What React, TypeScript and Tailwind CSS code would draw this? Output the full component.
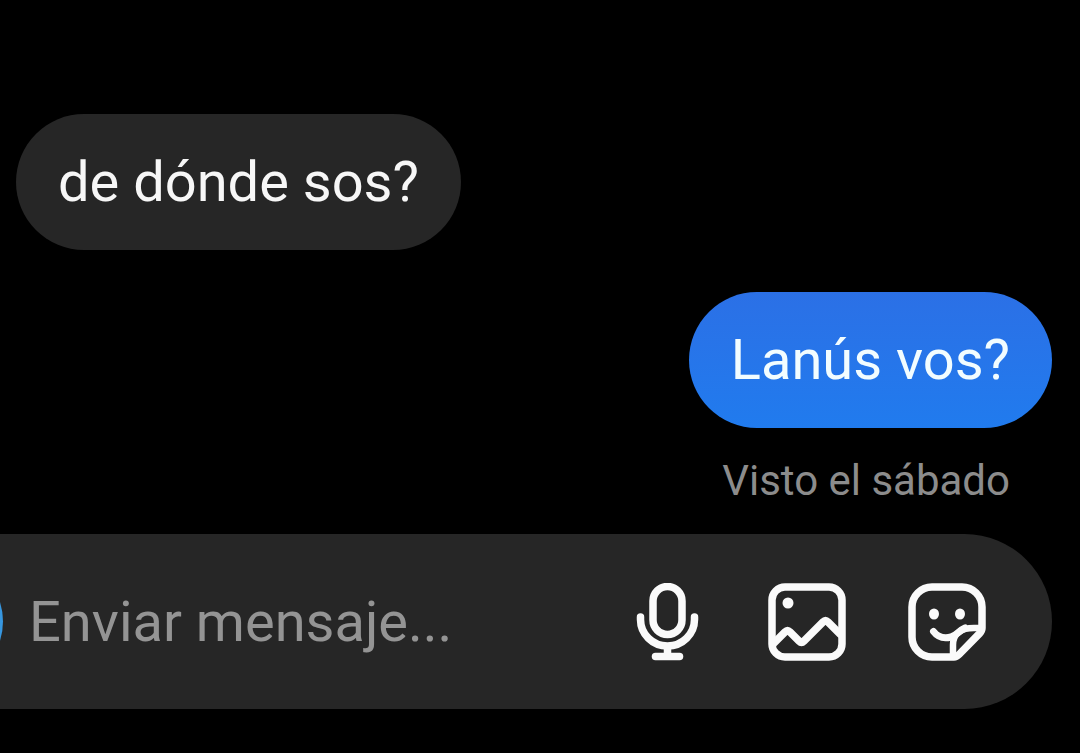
import type { ReactNode } from 'react';

function Bubble({ own = false, children }: { own?: boolean; children: ReactNode }) {
  return (
    <p
      className={
        own
          ? 'max-w-4/5 self-end rounded-[68px] bg-linear-to-b from-[#2b70e6] to-[#207bee] px-[42px] py-9 text-[56px] leading-[64px] text-[#f2fdff]'
          : 'max-w-4/5 self-start rounded-[68px] bg-[#262626] px-[42px] py-9 text-[56px] leading-[64px] text-[#f7f7f7]'
      }
    >
      {children}
    </p>
  );
}

function IconButton({ label, children }: { label: string; children: ReactNode }) {
  return (
    <button type="button" aria-label={label} className="size-[78px] shrink-0 text-[#fafafa]">
      <svg
        viewBox="0 0 78 78"
        fill="none"
        stroke="currentColor"
        strokeWidth="7.5"
        strokeLinecap="round"
        strokeLinejoin="round"
        className="size-full"
      >
        {children}
      </svg>
    </button>
  );
}

export default function App() {
  return (
    <main className="flex min-h-screen flex-col justify-end overflow-hidden bg-black pb-11 font-['Roboto',sans-serif]">
      <div className="flex flex-col gap-[42px] pr-7 pl-4">
        <Bubble>de dónde sos?</Bubble>
        <Bubble own>Lanús vos?</Bubble>
      </div>

      <p className="mt-7 pr-[70px] text-right text-[42px] leading-[50px] text-[#8c8c8c]">
        Visto el sábado
      </p>

      {/* composer, runs off the left edge */}
      <form className="mt-7 mr-7 -ml-[150px] flex items-center rounded-full bg-[#262626] py-[22px] pr-[66px] pl-[22px]">
        <button
          type="button"
          aria-label="Cámara"
          className="size-[131px] shrink-0 rounded-full bg-[#3797e0]"
        />
        <input
          type="text"
          aria-label="Mensaje"
          placeholder="Enviar mensaje..."
          className="ml-[26px] h-16 min-w-0 flex-1 bg-transparent text-[56px] leading-[64px] text-white outline-none placeholder:text-[#949494] placeholder:opacity-100"
        />
        <div className="flex gap-[62px]">
          <IconButton label="Mensaje de voz">
            <rect x="25" y="3.5" width="29" height="48" rx="14.5" />
            <path d="M12.5 34v2.500a27 26.500 0 0 0 54 0V34" />
            <path d="M39.5 64v9" />
            <path d="M27.500 73.5h24" />
          </IconButton>
          <IconButton label="Galería">
            <rect x="4" y="4" width="70" height="70" rx="13" />
            <path d="M6 60 17 49q2.500-2.500 5 0l9 9q2.500 2.500 5 0L55 39q2.500-2.500 5 0l12 12" />
            <circle cx="20" cy="20" r="5.5" fill="currentColor" stroke="none" />
          </IconButton>
          <IconButton label="Stickers">
            <path d="M46 74H24A20 20 0 0 1 4 54V24A20 20 0 0 1 24 4H54A20 20 0 0 1 74 24V45q0 3-2.500 5.500L51 71.500Q48.500 74 46 74Z" />
            <path d="M72 45H66C52 45 45 52 45 62V72" strokeWidth="6.5" />
            <path d="M25.500 48.500C30 54.500 37 55.500 43 54C49 52.500 50 48 57 45" strokeWidth="7" />
            <ellipse cx="26" cy="31" rx="5" ry="5.500" fill="currentColor" stroke="none" />
            <ellipse cx="52" cy="31" rx="5" ry="5.500" fill="currentColor" stroke="none" />
          </IconButton>
        </div>
      </form>
    </main>
  );
}
